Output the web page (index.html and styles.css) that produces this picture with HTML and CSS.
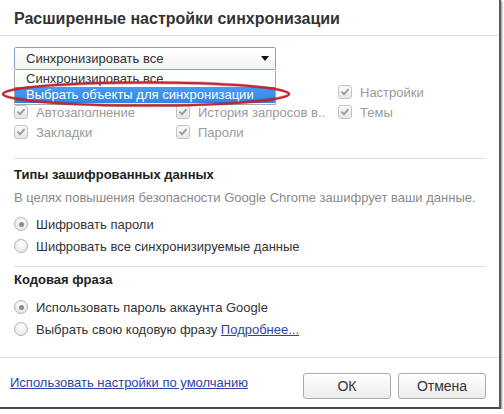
FILE: index.html
```html
<!DOCTYPE html>
<html lang="ru">
<head>
<meta charset="utf-8">
<title>Расширенные настройки синхронизации</title>
<link rel="stylesheet" href="styles.css">
</head>
<body>
<div class="dialog">
  <div class="header">
    <h1 class="title">Расширенные настройки синхронизации</h1>
  </div>
  <div class="content">
    <div class="sync">
      <div class="select-wrap">
        <div class="select">
          <span class="select-text">Синхронизировать все</span>
          <span class="arrow"></span>
        </div>
        <ul class="options">
          <li class="option">Синхронизировать все</li>
          <li class="option selected">Выбрать объекты для синхронизации</li>
        </ul>
      </div>
      <div class="checks">
        <div class="check"><span class="box"><svg viewBox="0 0 14 14"><path d="M3.5 7.2 L6 9.6 L10.6 4.2" /></svg></span></div>
        <div class="check"><span class="box"><svg viewBox="0 0 14 14"><path d="M3.5 7.2 L6 9.6 L10.6 4.2" /></svg></span></div>
        <div class="check"><span class="box"><svg viewBox="0 0 14 14"><path d="M3.5 7.2 L6 9.6 L10.6 4.2" /></svg></span><span class="label">Настройки</span></div>
        <div class="check"><span class="box"><svg viewBox="0 0 14 14"><path d="M3.5 7.2 L6 9.6 L10.6 4.2" /></svg></span><span class="label">Автозаполнение</span></div>
        <div class="check"><span class="box"><svg viewBox="0 0 14 14"><path d="M3.5 7.2 L6 9.6 L10.6 4.2" /></svg></span><span class="label">История запросов в..</span></div>
        <div class="check"><span class="box"><svg viewBox="0 0 14 14"><path d="M3.5 7.2 L6 9.6 L10.6 4.2" /></svg></span><span class="label">Темы</span></div>
        <div class="check"><span class="box"><svg viewBox="0 0 14 14"><path d="M3.5 7.2 L6 9.6 L10.6 4.2" /></svg></span><span class="label">Закладки</span></div>
        <div class="check"><span class="box"><svg viewBox="0 0 14 14"><path d="M3.5 7.2 L6 9.6 L10.6 4.2" /></svg></span><span class="label">Пароли</span></div>
      </div>
    </div>
    <div class="divider"></div>
    <section class="group group-enc">
      <h2 class="heading">Типы зашифрованных данных</h2>
      <p class="desc">В целях повышения безопасности Google Chrome зашифрует ваши данные.</p>
      <div class="radio-row first"><span class="radio on"></span><span>Шифровать пароли</span></div>
      <div class="radio-row"><span class="radio"></span><span>Шифровать все синхронизируемые данные</span></div>
    </section>
    <div class="divider divider-2"></div>
    <section class="group group-pass">
      <h2 class="heading">Кодовая фраза</h2>
      <div class="radio-row first"><span class="radio on"></span><span>Использовать пароль аккаунта Google</span></div>
      <div class="radio-row"><span class="radio"></span><span>Выбрать свою кодовую фразу <a class="link" href="#">Подробнее...</a></span></div>
    </section>
  </div>
  <div class="footer">
    <a class="link footer-link" href="#">Использовать настройки по умолчанию</a>
    <div class="buttons">
      <button class="btn btn-ok" type="button">ОК</button>
      <button class="btn" type="button">Отмена</button>
    </div>
  </div>
  <svg class="mark" viewBox="0 0 294 30" width="294" height="30">
    <ellipse cx="146" cy="15" rx="143" ry="11.5" fill="none" stroke="#7a1418" stroke-opacity="0.35" stroke-width="3.4"/>
    <ellipse cx="146" cy="15" rx="143" ry="11.5" fill="none" stroke="#c8222c" stroke-width="2"/>
  </svg>
</div>
</body>
</html>
```

FILE: styles.css
```css
* { box-sizing: border-box; }

html, body {
  margin: 0;
  padding: 0;
  background: #ffffff;
}

body {
  font-family: "Liberation Sans", Arial, sans-serif;
  font-size: 13px;
  color: #333333;
}

.dialog {
  position: relative;
  width: 501px;
  height: 409px;
  background: #ffffff;
  border-right: 2px solid #5a5a5a;
  border-bottom: 2px solid #4a4a4a;
  box-shadow: 1px 1px 2px rgba(0, 0, 0, 0.45);
  display: flex;
  flex-direction: column;
}

.header {
  height: 36px;
  padding: 2px 14px 0;
  border-bottom: 1px solid #e3e3e3;
}

.title {
  margin: 0;
  font-size: 16px;
  font-weight: bold;
  line-height: 33px;
  color: #333333;
}

.content {
  padding: 0 13px 0 14px;
  flex: 1;
}

.sync {
  padding-top: 11px;
}

.select-wrap {
  position: relative;
  width: 262px;
}

.select {
  height: 23px;
  border: 1px solid #84a1d4;
  border-radius: 2px;
  background: linear-gradient(#ffffff, #f3f3f3);
  display: flex;
  align-items: center;
  justify-content: space-between;
  padding: 0 6px 0 11px;
  line-height: 21px;
}

.arrow {
  width: 0;
  height: 0;
  border-left: 4px solid transparent;
  border-right: 4px solid transparent;
  border-top: 5px solid #111111;
}

.options {
  position: absolute;
  top: 100%;
  left: 0;
  right: 0;
  margin: 0;
  padding: 1px 0 1px;
  list-style: none;
  background: #ffffff;
  border: 1px solid #a9a9a9;
  border-top: none;
  z-index: 2;
}

.option {
  padding: 0 11px;
  line-height: 16px;
  height: 16px;
  white-space: nowrap;
  color: #333333;
}

.option.selected {
  background: linear-gradient(#4a9af2, #2f85e6);
  color: #ffffff;
}

.checks {
  margin-top: 12px;
  display: grid;
  grid-template-columns: 162px 162px 1fr;
  grid-auto-rows: 20px;
}

.check {
  display: flex;
  align-items: center;
  gap: 8px;
  color: #9a9a9a;
  min-width: 0;
}

.check .label {
  white-space: nowrap;
  overflow: hidden;
}

.box {
  flex: none;
  width: 14px;
  height: 14px;
  border: 1px solid #c4c4c4;
  border-radius: 3px;
  background: linear-gradient(#fbfbfb, #e6e6e6);
  display: flex;
}

.box svg {
  width: 12px;
  height: 12px;
}

.box path {
  fill: none;
  stroke: #9c9c9c;
  stroke-width: 2.2;
  stroke-linecap: round;
  stroke-linejoin: round;
}

.divider {
  height: 1px;
  background: #dedede;
  margin-top: 16px;
}

.divider-2 {
  margin-top: 9px;
}

.heading {
  margin: 0;
  font-size: 13px;
  font-weight: bold;
  line-height: 18px;
  color: #222222;
}

.group-enc .heading {
  margin-top: 7px;
}

.group-pass .heading {
  margin-top: 4px;
}

.desc {
  margin: 5px 0 0;
  line-height: 18px;
  color: #8a8a8a;
  white-space: nowrap;
}

.radio-row {
  display: flex;
  align-items: center;
  gap: 8px;
  height: 22px;
  color: #333333;
  white-space: nowrap;
}

.group-enc .radio-row.first {
  margin-top: 6px;
}

.group-pass .radio-row.first {
  margin-top: 7px;
}

.radio {
  flex: none;
  width: 14px;
  height: 14px;
  border-radius: 50%;
  border: 1px solid #b4b4b4;
  background: radial-gradient(circle at 50% 35%, #ffffff, #e0e0e0);
  display: flex;
  align-items: center;
  justify-content: center;
}

.radio.on::after {
  content: "";
  width: 5px;
  height: 5px;
  border-radius: 50%;
  background: #8a8a8a;
}

.link {
  color: #3340a6;
  text-decoration: underline;
}

.footer {
  height: 50px;
  border-top: 1px solid #e3e3e3;
  padding: 15px 13px 0 10px;
  display: flex;
  align-items: flex-start;
  justify-content: space-between;
}

.footer-link {
  line-height: 20px;
}

.buttons {
  display: flex;
  gap: 7px;
}

.btn {
  width: 88px;
  height: 26px;
  border: 1px solid #aaaaaa;
  border-radius: 3px;
  background: linear-gradient(#ffffff, #ececec);
  font-family: "Liberation Sans", Arial, sans-serif;
  font-size: 14px;
  color: #333333;
  padding: 0;
}

.mark {
  position: absolute;
  left: 0;
  top: 79px;
  z-index: 3;
  overflow: visible;
}
```
